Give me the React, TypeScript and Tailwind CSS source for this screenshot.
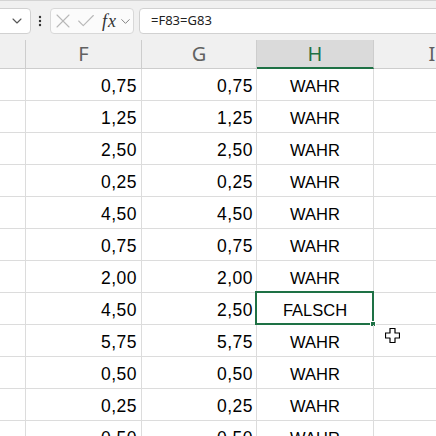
import { X, Check, ChevronDown } from "lucide-react";

const rows: [string, string, string][] = [
  ["0,75", "0,75", "WAHR"],
  ["1,25", "1,25", "WAHR"],
  ["2,50", "2,50", "WAHR"],
  ["0,25", "0,25", "WAHR"],
  ["4,50", "4,50", "WAHR"],
  ["0,75", "0,75", "WAHR"],
  ["2,00", "2,00", "WAHR"],
  ["4,50", "2,50", "FALSCH"],
  ["5,75", "5,75", "WAHR"],
  ["0,50", "0,50", "WAHR"],
  ["0,25", "0,25", "WAHR"],
  ["0,50", "0,50", "WAHR"],
];

export default function App() {
  return (
    <div className="relative w-[436px] h-[436px] overflow-hidden bg-[#f0f0f0] flex flex-col font-['Noto_Sans',sans-serif]">
      {/* Formula bar */}
      <div className="h-[40px] shrink-0 border-t border-[#d4d4d4] pt-[7px] flex items-start">
        <div className="ml-[-10px] w-[41px] h-[26px] rounded-[4px] border border-[#d1d1d1] bg-white flex items-center justify-end pr-[5px]">
          <ChevronDown size={16} strokeWidth={1.6} className="text-[#555]" />
        </div>
        <div className="ml-[7px] w-[4px] h-[26px] flex items-center">
          <svg width="4" height="12" viewBox="0 0 4 12">
            <circle cx="2" cy="2" r="1.2" fill="#333" />
            <circle cx="2" cy="6" r="1.2" fill="#333" />
            <circle cx="2" cy="10" r="1.2" fill="#333" />
          </svg>
        </div>
        <div className="ml-[8px] w-[84px] h-[26px] rounded-[4px] border border-[#d8d8d8] bg-[#fbfbfb] flex items-center">
          <X size={24} strokeWidth={1.1} className="text-[#b8b8b8]" />
          <Check size={22} strokeWidth={1.2} className="text-[#b8b8b8]" />
          <span className="ml-[5px] text-[18px] italic font-['Liberation_Serif',serif] text-[#333] tracking-[1px] leading-none">
            fx
          </span>
          <ChevronDown size={15} strokeWidth={1.5} className="ml-[1px] text-[#777]" />
        </div>
        <div className="ml-[5px] flex-1 mr-[-10px] h-[26px] rounded-[4px] border border-[#d1d1d1] bg-white flex items-center pl-[11px] text-[13px] text-[#222]">
          =F83=G83
        </div>
      </div>

      {/* Column headers */}
      <div className="h-[29px] shrink-0 flex text-[20px] text-[#616161]">
        <div className="w-[26px] shrink-0 border-r border-b border-[#cdcdcd]" />
        <div className="w-[116px] shrink-0 border-r border-b border-[#cdcdcd] flex items-center justify-center">F</div>
        <div className="w-[115px] shrink-0 border-r border-b border-[#cdcdcd] flex items-center justify-center">G</div>
        <div className="w-[117px] shrink-0 border-r border-[#cdcdcd] border-b-2 border-b-[#1e7145] bg-[#dadada] text-[#1e7145] flex items-center justify-center">
          H
        </div>
        <div className="w-[116px] shrink-0 border-b border-[#cdcdcd] flex items-center justify-center">I</div>
      </div>

      {/* Grid */}
      <div className="flex-1 bg-white font-['Liberation_Sans',Arial,sans-serif] text-black">
        {rows.map(([f, g, h], i) => (
          <div key={i} className="h-[32px] flex border-b border-[#dcdcdc]">
            <div className="w-[26px] shrink-0 border-r border-[#dcdcdc]" />
            <div className="w-[116px] shrink-0 border-r border-[#dcdcdc] flex items-center justify-end pt-[4px] pr-[4px] text-[17.5px] tracking-[0.5px]">
              {f}
            </div>
            <div className="w-[115px] shrink-0 border-r border-[#dcdcdc] flex items-center justify-end pt-[4px] pr-[3px] text-[17.5px] tracking-[0.5px]">
              {g}
            </div>
            <div className="relative w-[117px] shrink-0 border-r border-[#dcdcdc] flex items-center justify-center pt-[4px] text-[16.5px]">
              {h}
              {i === 7 && (
                <div className="absolute top-[-2px] bottom-[-1px] left-[-2px] right-[-1px] border-2 border-[#1e7145]">
                  <div className="absolute right-[-4px] bottom-[-4px] w-[6px] h-[6px] bg-[#1e7145] border border-white" />
                </div>
              )}
            </div>
            <div className="w-[116px] shrink-0" />
          </div>
        ))}
      </div>

      {/* Mouse cursor */}
      <svg className="absolute left-[385px] top-[328px]" width="15" height="15" viewBox="0 0 15 15">
        <path
          d="M5 0.5H10V5H14.5V10H10V14.5H5V10H0.5V5H5Z"
          fill="white"
          stroke="black"
          strokeWidth="1.2"
          strokeLinejoin="round"
        />
      </svg>
    </div>
  );
}
